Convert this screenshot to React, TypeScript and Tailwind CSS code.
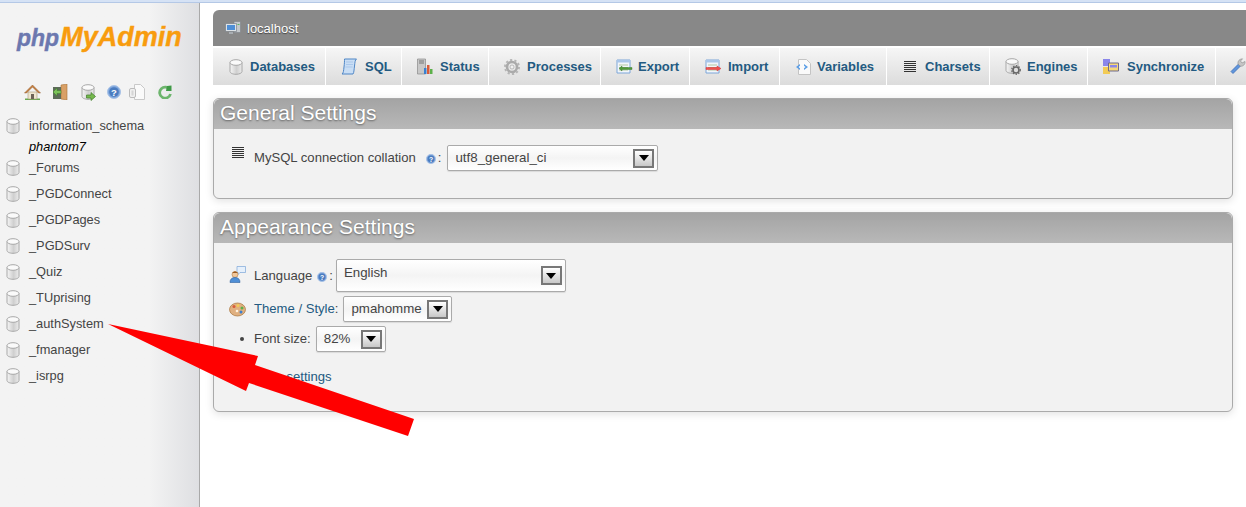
import React from "react";

const FONT = "font-['Liberation_Sans',Arial,sans-serif]";

function DbIcon() {
  return (
    <svg width="14" height="16" viewBox="0 0 14 16" className="shrink-0">
      <defs>
        <linearGradient id="dbg" x1="0" x2="1" y1="0" y2="0">
          <stop offset="0" stopColor="#f6f6f6" />
          <stop offset="0.55" stopColor="#cfcfcf" />
          <stop offset="1" stopColor="#ececec" />
        </linearGradient>
      </defs>
      <path d="M1 3.500v9c0 1.500 2.700 2.800 6 2.800s6-1.300 6-2.800v-9z" fill="url(#dbg)" stroke="#a8a8a8" />
      <ellipse cx="7" cy="3.500" rx="6" ry="2.800" fill="#fafafa" stroke="#a8a8a8" />
    </svg>
  );
}

function HomeIcon() {
  return (
    <svg width="17" height="16" viewBox="0 0 17 16">
      <path d="M1 14.500h15V16H1z" fill="#6aa84f" />
      <path d="M4 8h9v7H4z" fill="#efe6cf" stroke="#a89a7a" strokeWidth="0.6" />
      <path d="M7 10h3v5H7z" fill="#6d6256" />
      <path d="M0.500 9 8.500 1l8 8-2 0-6-6-6 6z" fill="#c8803e" stroke="#8f5b2c" strokeWidth="0.5" />
    </svg>
  );
}

function ExitIcon() {
  return (
    <svg width="16" height="16" viewBox="0 0 16 16">
      <path d="M9 1l6-1v16l-6-1z" fill="#d9a066" stroke="#a87238" strokeWidth="0.6" />
      <path d="M1 3h8v12H1z" fill="#5c6b58" />
      <path d="M1 8l4-4v2.500h4v3H5V12z" fill="#7cc35a" stroke="#3f7d2a" strokeWidth="0.5" />
    </svg>
  );
}

function DbGoIcon() {
  return (
    <span className="relative flex w-[15px] h-[16px]">
      <DbIcon />
      <svg width="10" height="9" viewBox="0 0 10 9" className="absolute left-[5px] top-[8px]">
        <path d="M0.500 3h4.500V0.500L9.500 4.500 5 8.500V6H0.500z" fill="#76b84e" stroke="#3f7d2a" strokeWidth="0.7" />
      </svg>
    </span>
  );
}

function HelpIcon({ size = 14 }: { size?: number }) {
  return (
    <svg width={size} height={size} viewBox="0 0 14 14" className="block">
      <circle cx="7" cy="7" r="6.500" fill="#7fa6dc" stroke="#a9c3e6" />
      <circle cx="7" cy="7" r="4.800" fill="#4a7cc0" />
      <text x="7" y="10.500" textAnchor="middle" fontSize="9.500" fontWeight="700" fill="#fff" fontFamily="Liberation Sans">?</text>
    </svg>
  );
}

function DocsIcon() {
  return (
    <svg width="16" height="16" viewBox="0 0 16 16">
      <path d="M5.500 0.500h6l4 4v11h-10z" fill="#fafafa" stroke="#c9c9c9" />
      <rect x="0.500" y="4.500" width="6" height="9" rx="1.500" fill="#f0f0f0" stroke="#bbb" />
      <path d="M2.500 6.500h2v5h-2z" fill="#d5d5d5" />
    </svg>
  );
}

function ReloadIcon() {
  return (
    <svg width="14" height="14" viewBox="0 0 14 14">
      <path d="M12 5a5.500 5.500 0 1 0 .5 4" fill="none" stroke="#6db56d" strokeWidth="2.800" />
      <path d="M9 1l4.500-.5V6H8z" fill="#3f9a46" />
    </svg>
  );
}

function ServerIcon() {
  return (
    <svg width="16" height="15" viewBox="0 0 16 15">
      <path d="M9 0.500h6.500v11H9z" fill="#c4c8cc" stroke="#7c8288" strokeWidth="0.6" />
      <path d="M0.500 2.500h11v8h-11z" fill="#dde2e6" stroke="#6f767c" strokeWidth="0.6" />
      <path d="M2 4h8v5H2z" fill="#4f8fd6" />
      <path d="M4 11h4v2H4z" fill="#a8adb2" />
      <path d="M12.500 3h2v1h-2z" fill="#5cb85c" />
    </svg>
  );
}

function SqlIcon() {
  return (
    <svg width="17" height="17" viewBox="0 0 17 17">
      <path d="M3.500 1h12c-1.500 1-1.500 3-2 7s-.5 6.500-1.500 8H1c1.500-1 1.500-3 2-7s.5-6 .5-8z" fill="#c9def5" stroke="#4f86c6" />
      <path d="M5 4h7M5 6.500h7M4.500 9h7" stroke="#9dbfe6" strokeWidth="0.7" />
    </svg>
  );
}

function StatusIcon() {
  return (
    <svg width="17" height="17" viewBox="0 0 17 17">
      <path d="M1.500 1h8v15h-8z" fill="#c8c8c8" stroke="#8a8a8a" strokeWidth="0.7" />
      <path d="M3 3h5M3 5h5" stroke="#777" />
      <path d="M8 10h2.500v6H8z" fill="#3a80d0" />
      <path d="M11 7h2.500v9H11z" fill="#d95c3a" />
      <path d="M14 11h2.500v5H14z" fill="#5cb04a" />
    </svg>
  );
}

function GearIcon() {
  return (
    <svg width="16" height="16" viewBox="0 0 16 16">
      <circle cx="8" cy="8" r="5" fill="none" stroke="#aaa" strokeWidth="2.600" />
      <circle cx="8" cy="8" r="7" fill="none" stroke="#b5b5b5" strokeWidth="2" strokeDasharray="2.200 2.200" />
      <circle cx="8" cy="8" r="2" fill="#f0f0f0" stroke="#999" strokeWidth="0.6" />
    </svg>
  );
}

function SheetIcon({ kind }: { kind: "export" | "import" }) {
  return (
    <svg width="17" height="15" viewBox="0 0 17 15">
      <path d="M1 1h13v13H1z" fill="#f2f6fb" stroke="#7ca6d8" />
      <path d="M1 1h13v2.500H1z" fill="#a9c6ea" />
      <path d="M3 6h9M3 8.500h9M3 11h9" stroke="#a3bf91" strokeWidth="0.8" />
      {kind === "export" ? (
        <path d="M3 9.500l3-2.500v1.500h10v2H6V12z" fill="#4f9a3a" stroke="#2f6e22" strokeWidth="0.4" />
      ) : (
        <path d="M1 8.500h11V7l4 2.500-4 2.500v-1.500H1z" fill="#f05050" stroke="#d02020" strokeWidth="0.4" />
      )}
    </svg>
  );
}

function VarsIcon() {
  return (
    <svg width="16" height="16" viewBox="0 0 16 16">
      <path d="M3.500 0.500h8l4 4v11h-12z" fill="#fafafa" stroke="#c4c4c4" />
      <path d="M5 5L1 8l4 3V9.200L3.500 8 5 6.800zM9 5l4 3-4 3V9.200L10.500 8 9 6.800z" fill="#5b9ee6" />
    </svg>
  );
}

function LinesIcon() {
  return (
    <svg width="12" height="12" viewBox="0 0 12 12" className="block">
      <path d="M0 .5h12M0 2.500h12M0 4.500h12M0 6.500h12M0 8.500h12M0 10.500h12" stroke="#333" strokeWidth="1" />
    </svg>
  );
}

function EnginesIcon() {
  return (
    <span className="relative flex w-[16px] h-[17px]">
      <DbIcon />
      <svg width="10" height="10" viewBox="0 0 10 10" className="absolute left-[6px] top-[7px]">
        <circle cx="5" cy="5" r="3" fill="#ddd" stroke="#666" strokeWidth="1.600" />
        <circle cx="5" cy="5" r="4.300" fill="none" stroke="#666" strokeWidth="1.200" strokeDasharray="1.400 1.400" />
      </svg>
    </span>
  );
}

function SyncIcon() {
  return (
    <svg width="16" height="15" viewBox="0 0 16 15">
      <path d="M0 0h7v7H0z" fill="#8a86ea" />
      <path d="M0 8h7v7H0z" fill="#f2cb55" />
      <path d="M5.500 4h10v8h-10z" fill="#f6d878" stroke="#6f6a8c" />
      <path d="M7 6h7v2.500H7z" fill="#8a86ea" />
    </svg>
  );
}

function WrenchIcon() {
  return (
    <svg width="16" height="17" viewBox="0 0 16 17">
      <path d="M1 13.500 8.500 6l2 2L3 15.500z" fill="#5f95dc" stroke="#3d6fb5" strokeWidth="0.8" />
      <path d="M8 6c-.5-3 1.500-5 4.500-5.200L10.500 3l1.500 2L15 3.500c.5 3-2.500 5.500-5 4.500z" fill="#c6c6c6" stroke="#8a8a8a" strokeWidth="0.6" />
    </svg>
  );
}

function LangIcon() {
  return (
    <svg width="17" height="17" viewBox="0 0 17 17" className="block">
      <path d="M8 0.500h8.500v6H11l-2 2V6.500H8z" fill="#e6f0fb" stroke="#7ca6d8" strokeWidth="0.7" />
      <circle cx="6" cy="8.500" r="3" fill="#f2c79a" stroke="#a36a30" strokeWidth="0.5" />
      <path d="M3.500 7c.5-2 4.500-2 5 0z" fill="#9a5a20" />
      <path d="M1 16.500c0-3.500 2-5 5-5s5 1.500 5 5z" fill="#4f8fd6" stroke="#2f62a0" strokeWidth="0.6" />
    </svg>
  );
}

function PaletteIcon() {
  return (
    <svg width="17" height="15" viewBox="0 0 17 15" className="block">
      <ellipse cx="8.500" cy="7.500" rx="8" ry="6.500" fill="#e0b080" stroke="#a87238" strokeWidth="0.7" />
      <circle cx="5" cy="4.500" r="1.500" fill="#d95c3a" />
      <circle cx="9" cy="3.500" r="1.500" fill="#f2cb55" />
      <circle cx="13" cy="6" r="1.500" fill="#5cb04a" />
      <circle cx="12" cy="10" r="1.500" fill="#3a80d0" />
      <circle cx="8" cy="9" r="1.300" fill="#fff2df" />
    </svg>
  );
}

function Select({ value, className, textClass = "" }: { value: string; className: string; textClass?: string }) {
  return (
    <div className={`flex items-center justify-between border border-[#aaa] rounded-[2px] bg-gradient-to-b from-white via-[#f4f4f4] to-white shadow-[0_1px_1px_rgba(0,0,0,0.1)] text-[13.300px] text-[#444] pl-[7px] pr-[3px] ${className}`}>
      <span className={textClass}>{value}</span>
      <span className="w-[21px] h-[19px] border-2 border-[#777] bg-gradient-to-b from-white to-[#c8c8c8] flex items-center justify-center shrink-0">
        <span className="w-0 h-0 border-x-[5px] border-x-transparent border-t-[6px] border-t-black" />
      </span>
    </div>
  );
}

const DATABASES = ["_Forums", "_PGDConnect", "_PGDPages", "_PGDSurv", "_Quiz", "_TUprising", "_authSystem", "_fmanager", "_isrpg"];

const TABS: { label: string; icon: React.ReactNode; w: string; pad: string; slot: string }[] = [
  { label: "Databases", icon: <DbIcon />, w: "w-[113px]", pad: "pl-[16px]", slot: "w-[21px]" },
  { label: "SQL", icon: <SqlIcon />, w: "w-[76px]", pad: "pl-[15px]", slot: "w-[24px]" },
  { label: "Status", icon: <StatusIcon />, w: "w-[87px]", pad: "pl-[14px]", slot: "w-[24px]" },
  { label: "Processes", icon: <GearIcon />, w: "w-[112px]", pad: "pl-[15px]", slot: "w-[23px]" },
  { label: "Export", icon: <SheetIcon kind="export" />, w: "w-[89px]", pad: "pl-[15px]", slot: "w-[22px]" },
  { label: "Import", icon: <SheetIcon kind="import" />, w: "w-[90px]", pad: "pl-[15px]", slot: "w-[23px]" },
  { label: "Variables", icon: <VarsIcon />, w: "w-[107px]", pad: "pl-[15px]", slot: "w-[22px]" },
  { label: "Charsets", icon: <LinesIcon />, w: "w-[103px]", pad: "pl-[17px]", slot: "w-[21px]" },
  { label: "Engines", icon: <EnginesIcon />, w: "w-[98px]", pad: "pl-[15px]", slot: "w-[22px]" },
  { label: "Synchronize", icon: <SyncIcon />, w: "w-[128px]", pad: "pl-[15px]", slot: "w-[24px]" },
];

function PanelTitle({ children }: { children: React.ReactNode }) {
  return (
    <div className="h-[30px] bg-gradient-to-b from-[#a4a4a4] to-[#b8b8b8] rounded-t-[6px] pl-[6px] text-[21px] leading-[28px] text-white [text-shadow:0_1px_2px_rgba(0,0,0,0.45)]">
      {children}
    </div>
  );
}

export default function App() {
  return (
    <div className={`${FONT} w-[1246px] h-[507px] overflow-hidden bg-white flex flex-col relative`}>
      <div className="h-[3px] bg-[#d5e2f5] border-b border-[#b4c8e6] shrink-0" />
      <div className="flex flex-1 min-h-0">
        <aside className="w-[200px] shrink-0 bg-gradient-to-r from-[#f3f3f3] from-[75%] to-[#dedfe2] border-r border-[#a9a9a9] text-[12.800px] text-[#444]">
          <div className="mt-[18px] pl-[17px] h-[32px] leading-[32px] font-bold italic whitespace-nowrap [-webkit-text-stroke:0.4px]">
            <span className="text-[23px] text-[#6c78af]">php</span>
            <span className="text-[27px] text-[#f89c0e] ml-[1px]">MyAdmin</span>
          </div>
          <div className="flex items-center mt-[31px] pl-[24px] h-[16px]">
            <span className="w-[28px] flex"><HomeIcon /></span>
            <span className="w-[29px] flex"><ExitIcon /></span>
            <span className="w-[26px] flex"><DbGoIcon /></span>
            <span className="w-[22px] flex"><HelpIcon /></span>
            <span className="w-[29px] flex"><DocsIcon /></span>
            <ReloadIcon />
          </div>
          <ul className="mt-[13px] pl-[6px]">
            <li className="flex items-center h-[26px]">
              <DbIcon />
              <span className="ml-[9px]">information_schema</span>
            </li>
            <li className="flex items-center h-[16px] pl-[23px] italic text-black">phantom7</li>
            {DATABASES.map((name) => (
              <li key={name} className="flex items-center h-[26px]">
                <DbIcon />
                <span className="ml-[9px]">{name}</span>
              </li>
            ))}
          </ul>
        </aside>

        <main className="flex-1 min-w-0 pl-[13px] pt-[7px]">
          <div className="h-[36px] bg-[#888] rounded-tl-[6px] flex items-center pl-[12px] pt-[1px] text-[13px] text-white">
            <ServerIcon />
            <span className="ml-[6px] [text-shadow:0_1px_1px_rgba(0,0,0,0.5)]">localhost</span>
          </div>
          <nav className="flex mt-[2px] h-[37px] whitespace-nowrap">
            {TABS.map((tab) => (
              <div
                key={tab.label}
                className={`${tab.w} ${tab.pad} shrink-0 flex items-center border-r border-white bg-gradient-to-b from-[#f6f6f6] to-[#dcdcdc] text-[13px] font-bold text-[#235a81]`}
              >
                <span className={`${tab.slot} flex shrink-0`}>{tab.icon}</span>
                <span>{tab.label}</span>
              </div>
            ))}
            <div className="flex-1 flex items-center pl-[14px] bg-gradient-to-b from-[#f6f6f6] to-[#dcdcdc]">
              <WrenchIcon />
            </div>
          </nav>

          <section className="mt-[13px] w-[1020px] h-[101px] rounded-[6px] border border-[#aaa] bg-[#f2f2f2] shadow-[0_2px_8px_rgba(0,0,0,0.12)] overflow-hidden">
            <PanelTitle>General Settings</PanelTitle>
            <div className="flex items-start pl-[18px] pt-[16px] text-[13.100px] text-[#444]">
              <span className="mt-[2px] w-[22px]"><LinesIcon /></span>
              <span className="mt-[3px]">MySQL connection collation</span>
              <span className="mt-[9px] ml-[10px]"><HelpIcon size={10} /></span>
              <span className="mt-[3px] ml-[2px] mr-[6px]">:</span>
              <Select value="utf8_general_ci" className="w-[211px] h-[26px]" />
            </div>
          </section>

          <section className="mt-[13px] w-[1020px] h-[200px] rounded-[6px] border border-[#aaa] bg-[#f2f2f2] shadow-[0_2px_8px_rgba(0,0,0,0.12)] overflow-hidden text-[13.100px] text-[#444]">
            <PanelTitle>Appearance Settings</PanelTitle>
            <div className="pl-[15px] pt-[16px]">
              <div className="flex items-center h-[33px]">
                <span className="w-[25px] -mt-[3px]"><LangIcon /></span>
                <span>Language</span>
                <span className="mt-[3px] ml-[5px]"><HelpIcon size={10} /></span>
                <span className="ml-[2px] mr-[3px]">:</span>
                <Select value="English" className="w-[230px] h-[33px]" textClass="-mt-[6px]" />
              </div>
              <div className="flex items-center h-[26px] mt-[4px]">
                <span className="w-[25px]"><PaletteIcon /></span>
                <span className="text-[#235a81]">Theme / Style</span>
                <span className="mr-[5px]">:</span>
                <Select value="pmahomme" className="w-[109px] h-[26px]" />
              </div>
              <div className="flex items-center h-[26px] mt-[4px]">
                <span className="w-[25px] pl-[11px]">
                  <span className="block w-[4px] h-[4px] rounded-full bg-[#444]" />
                </span>
                <span>Font size:</span>
                <Select value="82%" className="w-[70px] h-[26px] ml-[5px]" />
              </div>
              <div className="mt-[15px] pl-[24px] text-[#235a81]">More settings</div>
            </div>
          </section>
        </main>
      </div>

      <svg width="1246" height="507" viewBox="0 0 1246 507" className="absolute inset-0 pointer-events-none">
        <polygon points="108,324 258,356 255,365 414,419 408,436 249,383 246,391" fill="#ff0000" />
      </svg>
    </div>
  );
}
